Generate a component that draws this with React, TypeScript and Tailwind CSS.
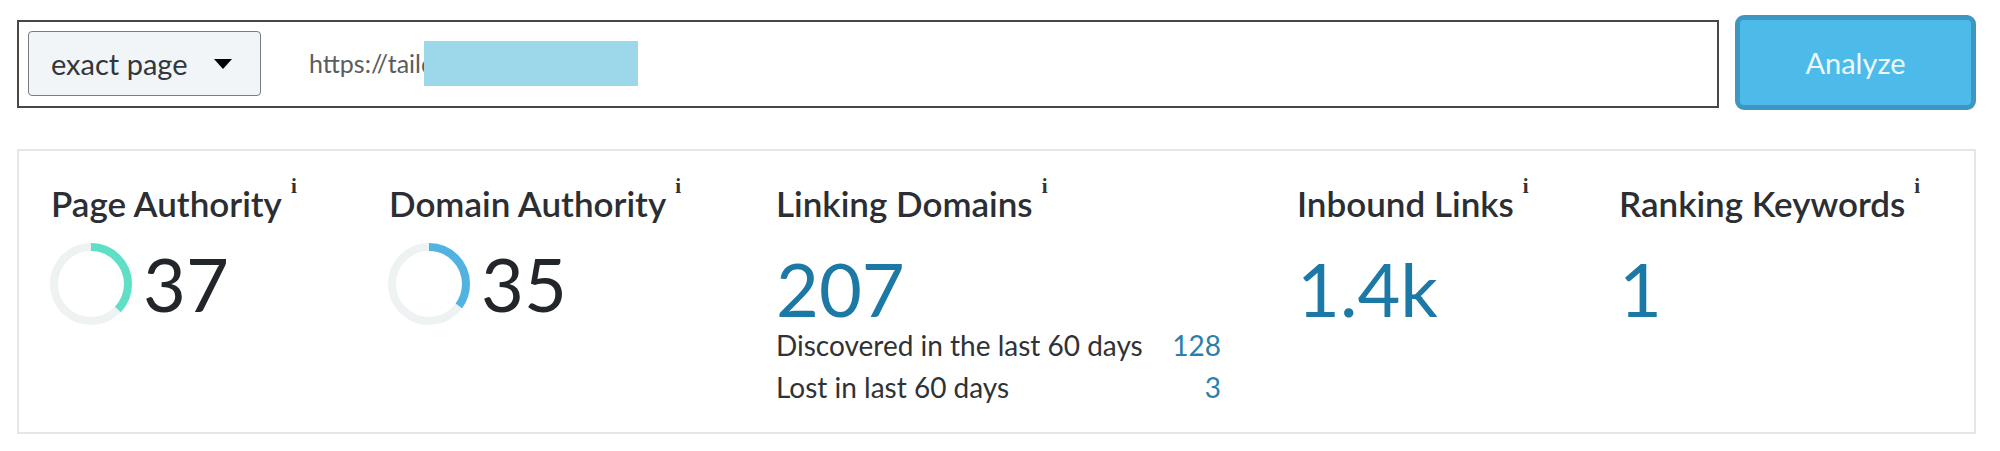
type Stat = {
  title: string;
  value: string;
  ring: { pct: number; color: string };
};

function Ring({ pct, color }: { pct: number; color: string }) {
  const r = 37;
  const c = 2 * Math.PI * r;
  return (
    <svg width="84" height="84" viewBox="0 0 84 84" className="shrink-0">
      <circle cx="42" cy="42" r={r} fill="none" stroke="#eef2f2" strokeWidth="8" />
      <circle
        cx="42"
        cy="42"
        r={r}
        fill="none"
        stroke={color}
        strokeWidth="8"
        strokeDasharray={`${(c * pct) / 100} ${c}`}
        transform="rotate(-90 42 42)"
      />
    </svg>
  );
}

function Title({ children }: { children: string }) {
  return (
    <h3 className="flex items-start text-[35px] leading-[38px] font-semibold text-[#2b2e33] whitespace-nowrap">
      {children}
      <span className="ml-[9px] -mt-[8px] text-[21px] leading-none font-['Liberation_Serif',serif] text-[#333]">i</span>
    </h3>
  );
}

export default function App() {
  const stats: Stat[] = [
    { title: 'Page Authority', value: '37', ring: { pct: 37, color: '#5fdfc6' } },
    { title: 'Domain Authority', value: '35', ring: { pct: 35, color: '#52b3e0' } },
  ];

  return (
    <div className="w-[2000px] h-[451px] bg-white font-['Lato','Noto_Sans',sans-serif] pt-[15px] pl-[17px] pr-[24px]">
      {/* Search bar */}
      <div className="flex items-center gap-[16px]">
        <div className="flex-1 h-[88px] border-2 border-[#474747] flex items-center pl-[9px] mt-[2px]">
          <button className="w-[233px] h-[65px] bg-[#f1f5f7] border-[1.5px] border-[#7a7d80] rounded-[4px] flex items-center justify-between pl-[22px] pr-[28px] text-[29px] text-[#33363a]">
            exact page
            <span className="w-0 h-0 border-l-[9px] border-r-[9px] border-t-[10px] border-l-transparent border-r-transparent border-t-black" />
          </button>
          <div className="flex items-center ml-[48px] h-[46px]">
            <span className="text-[25px] text-[#5a5d60] whitespace-nowrap">https://taild</span>
            <span className="w-[214px] h-[45px] bg-[#9dd7ea] -ml-[11px]" />
          </div>
        </div>
        <button className="w-[241px] h-[95px] bg-[#4cbbe9] border-[5px] border-[#3e97c3] rounded-[9px] text-[29px] text-[#eef9ff]">
          Analyze
        </button>
      </div>

      {/* Metrics panel */}
      <div className="mt-[39px] h-[285px] border-2 border-[#e6e6e6] grid grid-cols-[338px_387px_521px_322px_1fr] pl-[32px] pt-[33px]">
        {stats.map((s) => (
          <div key={s.title}>
            <Title>{s.title}</Title>
            <div className="flex items-center mt-[20px] -ml-[2px]">
              <Ring pct={s.ring.pct} color={s.ring.color} />
              <span className="ml-[10px] text-[74px] leading-none text-[#22252a]">{s.value}</span>
            </div>
          </div>
        ))}

        <div>
          <Title>Linking Domains</Title>
          <div className="mt-[30px] text-[74px] leading-none text-[#1c78a5]">207</div>
          <div className="w-[445px] -mt-[2px] text-[28px] leading-[42px] text-[#2f3236]">
            <div className="flex justify-between">
              <span>Discovered in the last 60 days</span>
              <span className="text-[#2c7fab]">128</span>
            </div>
            <div className="flex justify-between">
              <span>Lost in last 60 days</span>
              <span className="text-[#2c7fab]">3</span>
            </div>
          </div>
        </div>

        <div>
          <Title>Inbound Links</Title>
          <div className="mt-[30px] text-[74px] leading-none text-[#1c78a5]">1.4k</div>
        </div>

        <div>
          <Title>Ranking Keywords</Title>
          <div className="mt-[30px] text-[74px] leading-none text-[#1c78a5]">1</div>
        </div>
      </div>
    </div>
  );
}
